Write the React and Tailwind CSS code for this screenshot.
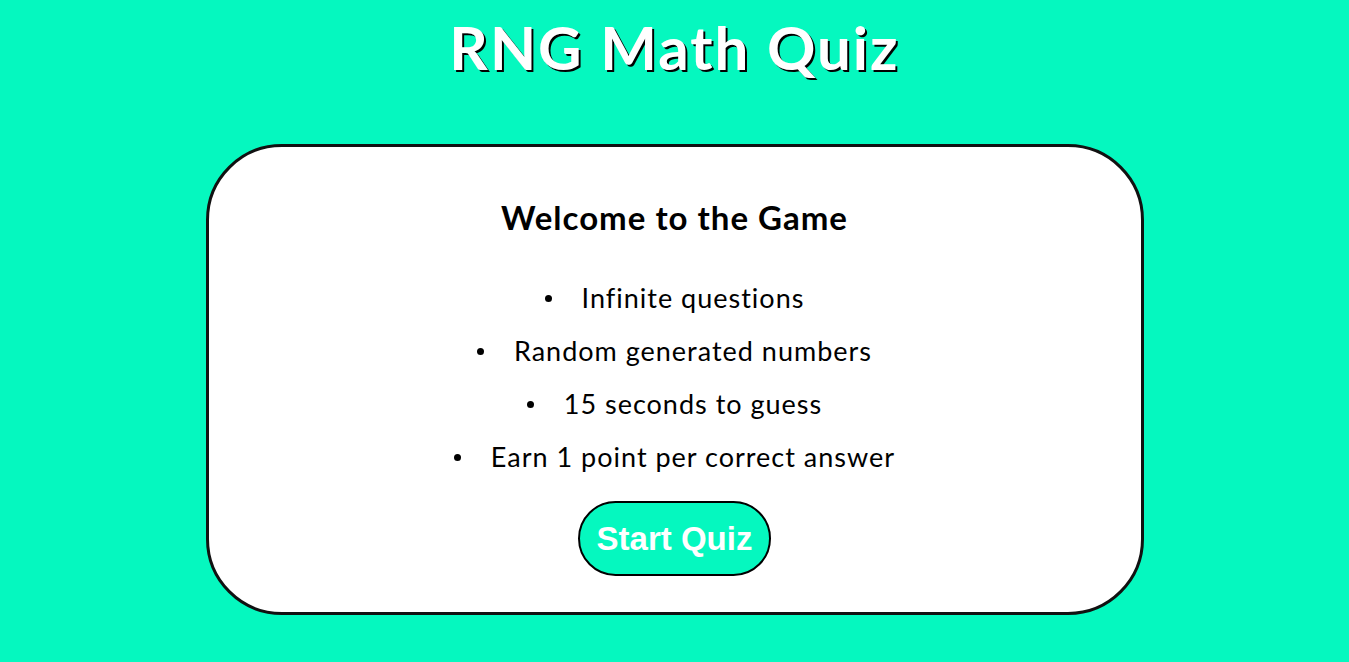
export default function App() {
  const rules = [
    "Infinite questions",
    "Random generated numbers",
    "15 seconds to guess",
    "Earn 1 point per correct answer",
  ];

  return (
    <div className="min-h-screen bg-[#05f8bf] flex flex-col items-center font-['Lato',sans-serif]">
      <h1 className="mt-[14px] h-[66px] text-[60px] leading-[66px] font-bold text-white tracking-[2px] [text-shadow:2px_2px_0_#000]">
        RNG Math Quiz
      </h1>

      <div className="mt-[64px] w-[938px] h-[471px] bg-white border-[3px] border-[#111] rounded-[76px] flex flex-col items-center">
        <h2 className="mt-[50px] text-[33px] leading-[40px] font-bold text-black tracking-[1px]">
          Welcome to the Game
        </h2>

        <ul className="mt-[45px] flex flex-col items-center gap-[21px]">
          {rules.map((rule) => (
            <li key={rule} className="flex items-center text-[27px] leading-[32px] text-black tracking-[1px]">
              <span className="w-[7px] h-[7px] rounded-full bg-black mr-[30px]" />
              <span>{rule}</span>
            </li>
          ))}
        </ul>

        <button className="mt-[28px] w-[193px] h-[75px] rounded-full border-2 border-black bg-[#05f8bf] text-white font-bold text-[33px] font-['Liberation_Sans',sans-serif]">
          Start Quiz
        </button>
      </div>
    </div>
  );
}
